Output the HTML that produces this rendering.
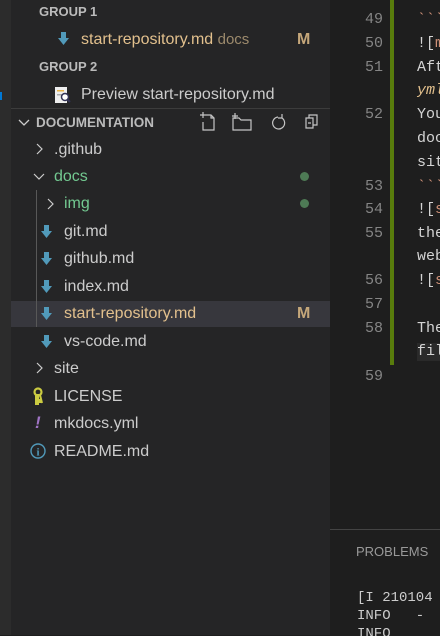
<!DOCTYPE html><html><head><style>
body{margin:0;width:440px;height:635px;overflow:hidden;background:#1e1e1e;font-family:"Liberation Sans",sans-serif;position:relative}
.ab{position:absolute;left:0;top:0;width:11px;height:635px;background:#2c2c2c}
.sb{position:absolute;left:11px;top:0;width:319px;height:635px;background:#252526}
.t{position:absolute;font-size:16px;color:#ccc;white-space:nowrap;line-height:18px}
.h{font-weight:bold;font-size:13px;color:#bbb}
.ic{position:absolute;width:11px;height:13px}
.dot{position:absolute;left:300px;width:9px;height:9px;border-radius:50%;background:#4e7a55}
#ed{position:absolute;left:330px;top:0;width:110px;height:529px;overflow:hidden;background:#1e1e1e}
#ed div{position:absolute;font-family:"Liberation Mono",monospace;font-size:15px;line-height:18px;white-space:nowrap}
#ed .n{left:0;width:53px;text-align:right;color:#858585}
#ed .c{left:87px;color:#d4d4d4}
#pn{position:absolute;left:330px;top:529px;width:110px;height:106px;overflow:hidden;border-top:1px solid #444;background:#1e1e1e}
#pn div{position:absolute;white-space:nowrap}
</style></head><body>
<div class="ab"></div><div style="position:absolute;left:0;top:92px;width:2px;height:8px;background:#0078d4"></div>
<div class="sb"></div>
<div class="t h" style="left:39px;top:3px">GROUP 1</div>
<svg class="ic" style="left:58px;top:32px" viewBox="0 0 11 13"><path d="M3 0h5v6h3l-5.5 7L0 6h3z" fill="#519aba"/></svg>
<div class="t" style="left:81px;top:31px;color:#e2c08d">start-repository.md <span style="color:#9c8a6c;font-size:15px">docs</span></div>
<div class="t" style="left:297px;top:31px;color:#c5a77a;font-weight:bold">M</div>
<div class="t h" style="left:39px;top:58px">GROUP 2</div>
<svg style="position:absolute;left:54px;top:86px" width="17" height="18"><rect x="1" y="1" width="12" height="16" fill="#eee"/><rect x="3" y="4" width="7" height="1.5" fill="#e8b44b"/><rect x="3" y="8" width="5" height="1.5" fill="#aaa"/><circle cx="11" cy="11" r="3.5" fill="#fff" stroke="#335" stroke-width="1.5"/><path d="M13 13l3 3" stroke="#335" stroke-width="2"/></svg>
<div class="t" style="left:81px;top:86px">Preview start-repository.md</div>
<div style="position:absolute;left:11px;top:108px;width:319px;height:1px;background:#3c3c3c"></div>
<svg style="position:absolute;left:18px;top:117px" width="12" height="10"><path d="M1 3l5 5 5-5" stroke="#ccc" fill="none" stroke-width="1.3"/></svg>
<div class="t h" style="left:36px;top:114px;font-size:13.5px">DOCUMENTATION</div>
<svg style="position:absolute;left:198px;top:112px" width="125" height="20" fill="none" stroke="#c5c5c5" stroke-width="1.2"><path d="M5 3h8l3 3v12H5v-8M2 3h6M5 0v6M13 3v3h3"/><path d="M35 6h6l2 2h10v10H35zM37 1v6M34 4h6"/><path d="M80 5a6 6 0 1 0 4 1M84 2v4h-4"/><path d="M108 6h7v10h-7zM111 6V3h8v10h-4M110 11h3"/></svg>
<svg style="position:absolute;left:35px;top:143px" width="8" height="12"><path d="M2 1l5 5-5 5" stroke="#ccc" fill="none" stroke-width="1.2"/></svg>
<div class="t" style="left:54px;top:141px">.github</div>
<svg style="position:absolute;left:33px;top:172px" width="12" height="10"><path d="M1 2l5 5 5-5" stroke="#ccc" fill="none" stroke-width="1.2"/></svg>
<div class="t" style="left:54px;top:168px;color:#73c991">docs</div><div class="dot" style="top:172px"></div>
<div style="position:absolute;left:36px;top:190px;width:1px;height:134px;background:#585858"></div>
<svg style="position:absolute;left:46px;top:198px" width="8" height="12"><path d="M2 1l5 5-5 5" stroke="#ccc" fill="none" stroke-width="1.2"/></svg>
<div class="t" style="left:64px;top:195px;color:#73c991">img</div><div class="dot" style="top:199px"></div>
<svg class="ic" style="left:41px;top:225px" viewBox="0 0 11 13"><path d="M3 0h5v6h3l-5.5 7L0 6h3z" fill="#519aba"/></svg><div class="t" style="left:64px;top:223px">git.md</div>
<svg class="ic" style="left:41px;top:252px" viewBox="0 0 11 13"><path d="M3 0h5v6h3l-5.5 7L0 6h3z" fill="#519aba"/></svg><div class="t" style="left:64px;top:250px">github.md</div>
<svg class="ic" style="left:41px;top:280px" viewBox="0 0 11 13"><path d="M3 0h5v6h3l-5.5 7L0 6h3z" fill="#519aba"/></svg><div class="t" style="left:64px;top:278px">index.md</div>
<div style="position:absolute;left:11px;top:301px;width:319px;height:26px;background:#37373d"></div>
<div style="position:absolute;left:36px;top:301px;width:1px;height:26px;background:#585858"></div>
<svg class="ic" style="left:41px;top:307px" viewBox="0 0 11 13"><path d="M3 0h5v6h3l-5.5 7L0 6h3z" fill="#519aba"/></svg><div class="t" style="left:64px;top:305px;color:#e2c08d">start-repository.md</div>
<div class="t" style="left:297px;top:305px;color:#c5a77a;font-weight:bold">M</div>
<svg class="ic" style="left:41px;top:335px" viewBox="0 0 11 13"><path d="M3 0h5v6h3l-5.5 7L0 6h3z" fill="#519aba"/></svg><div class="t" style="left:64px;top:333px">vs-code.md</div>
<svg style="position:absolute;left:35px;top:362px" width="8" height="12"><path d="M2 1l5 5-5 5" stroke="#ccc" fill="none" stroke-width="1.2"/></svg>
<div class="t" style="left:54px;top:360px">site</div>
<svg style="position:absolute;left:31px;top:387px" width="14" height="18"><circle cx="7" cy="5" r="3.5" fill="none" stroke="#cbcb41" stroke-width="2.2"/><path d="M5 8v9h2v-2h2v-2H7V8zM9 8l2 8" stroke="#cbcb41" stroke-width="2" fill="#cbcb41"/></svg>
<div class="t" style="left:54px;top:388px">LICENSE</div>
<div class="t" style="left:35px;top:414px;color:#a074c4;font-weight:bold;font-style:italic;font-size:17px">!</div><div class="t" style="left:54px;top:415px">mkdocs.yml</div>
<svg style="position:absolute;left:30px;top:443px" width="16" height="16"><circle cx="8" cy="8" r="7" stroke="#519aba" stroke-width="1.4" fill="none"/><text x="8" y="12.5" font-size="11" font-weight="bold" fill="#519aba" text-anchor="middle" font-family="Liberation Serif">i</text></svg>
<div class="t" style="left:54px;top:443px">README.md</div>
<div id="ed">
<div style="left:60px;top:0;width:4px;height:365px;background:#587c0c"></div>
<div class="n" style="top:11px">49</div><div class="n" style="top:35px">50</div><div class="n" style="top:59px">51</div><div class="n" style="top:106px">52</div><div class="n" style="top:178px">53</div><div class="n" style="top:201px">54</div><div class="n" style="top:225px">55</div><div class="n" style="top:272px">56</div><div class="n" style="top:296px">57</div><div class="n" style="top:320px">58</div><div class="n" style="top:368px">59</div>
<div class="c" style="top:-12px">in</div><div class="c" style="top:11px;color:#ce9178">&#96;&#96;&#96;</div>
<div class="c" style="top:35px">![<span style="color:#ce9178">m</span></div><div class="c" style="top:59px">Aft</div><div class="c" style="top:82px;font-style:italic;color:#e2c08d">yml</div>
<div class="c" style="top:106px">You</div><div class="c" style="top:130px">doc</div><div class="c" style="top:154px">sit</div><div class="c" style="top:178px;color:#ce9178">&#96;&#96;&#96;</div>
<div class="c" style="top:201px">![<span style="color:#ce9178">s</span></div><div class="c" style="top:225px">the</div><div class="c" style="top:248px">web</div><div class="c" style="top:272px">![<span style="color:#ce9178">s</span></div>
<div class="c" style="top:320px">The</div><div class="c" style="top:343px;background:#2a2a2a">fil</div>
</div>
<div id="pn">
<div style="left:26px;top:14px;font-size:13px;color:#999;font-family:'Liberation Sans',sans-serif">PROBLEMS</div>
<div style="left:27px;top:59px;font-family:'Liberation Mono',monospace;font-size:14px;color:#ccc;line-height:18px">[I 210104</div>
<div style="left:27px;top:77px;font-family:'Liberation Mono',monospace;font-size:14px;color:#ccc;line-height:18px">INFO &nbsp;&nbsp;-</div>
<div style="left:27px;top:95px;font-family:'Liberation Mono',monospace;font-size:14px;color:#ccc;line-height:18px">INFO</div>
</div>
</body></html>
